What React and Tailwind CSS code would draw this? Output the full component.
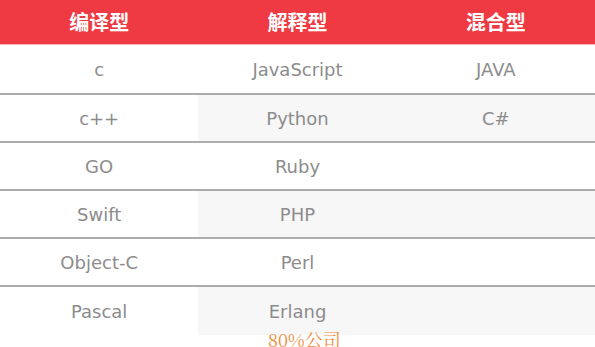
import React from "react";

const rows = [
  ["c", "JavaScript", "JAVA"],
  ["c++", "Python", "C#"],
  ["GO", "Ruby", ""],
  ["Swift", "PHP", ""],
  ["Object-C", "Perl", ""],
  ["Pascal", "Erlang", ""],
];

export default function App() {
  return (
    <div className="relative w-[595px] h-[347px] bg-white overflow-hidden font-['DejaVu_Sans','Noto_Sans_CJK_SC',sans-serif]">
      <div className="grid grid-cols-3 h-[45px] bg-[#ef3a43] border-b border-[#f9b5b8] text-white text-[20px] font-bold font-['Noto_Sans_CJK_SC',sans-serif]">
        <div className="flex items-center justify-center">编译型</div>
        <div className="flex items-center justify-center">解释型</div>
        <div className="flex items-center justify-center">混合型</div>
      </div>
      {rows.map((r, i) => (
        <div
          key={i}
          className={`grid grid-cols-3 text-[18px] text-[#8c8c8c] ${
            i === 0 ? "h-[50px]" : "h-[48px]"
          } ${i < rows.length - 1 ? "border-b-2 border-[#acacac]" : ""}`}
        >
          <div className="flex items-center justify-center bg-white">{r[0]}</div>
          <div
            className={`flex items-center justify-center ${
              i % 2 === 1 ? "bg-[#f7f7f7]" : "bg-white"
            }`}
          >
            {r[1]}
          </div>
          <div
            className={`flex items-center justify-center ${
              i % 2 === 1 ? "bg-[#f7f7f7]" : "bg-white"
            }`}
          >
            {r[2]}
          </div>
        </div>
      ))}
      <div className="absolute left-[268px] top-[330px] text-[18px] leading-none text-[#f28a3a] font-['Noto_Serif_CJK_SC','Liberation_Serif',serif]">
        80%公司
      </div>
    </div>
  );
}
